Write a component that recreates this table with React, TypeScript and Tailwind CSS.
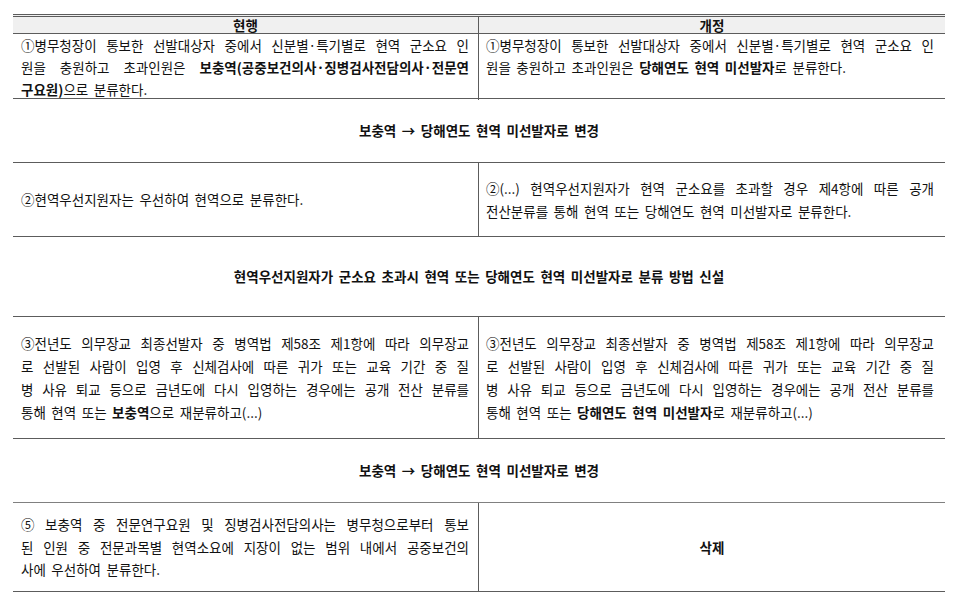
import React from "react";

const font = { fontFamily: '"Noto Sans CJK KR", "Noto Sans", sans-serif' };

function J({ children }: { children: React.ReactNode }) {
  return <div className="text-justify [text-align-last:justify]">{children}</div>;
}
function L({ children }: { children: React.ReactNode }) {
  return <div className="text-left [word-spacing:2.5px]">{children}</div>;
}
function B({ children }: { children: React.ReactNode }) {
  return <span className="font-bold">{children}</span>;
}
function W({ children }: { children: React.ReactNode }) {
  return <span className="inline-block">{children}</span>;
}

function Gap({ h, children }: { h: string; children: React.ReactNode }) {
  return (
    <div className={`${h} flex items-center justify-center font-bold [word-spacing:2.5px]`}>
      {children}
    </div>
  );
}

export default function App() {
  return (
    <div
      className="w-[960px] h-[609px] bg-white pt-[14px] pl-[13px] text-[13.5px] text-[#111111]"
      style={font}
    >
      <div className="w-[932px]">
        {/* header */}
        <div className="grid grid-cols-[466px_466px] border-t-[3px] border-double border-[#5c5c5c] border-b border-b-[#5c5c5c] bg-[#f0f0f0] h-[20px]">
          <div className="border-r border-[#5c5c5c] flex items-center justify-center font-bold leading-[16px] pb-[2px]">현행</div>
          <div className="flex items-center justify-center font-bold leading-[16px] pb-[2px]">개정</div>
        </div>
        {/* row 1 */}
        <div className="grid grid-cols-[466px_466px] border-b border-[#5c5c5c] h-[65px]">
          <div className="border-r border-[#5c5c5c] pl-[8px] pr-[9px] leading-[22px]">
            <J><W>①병무청장이</W> 통보한 선발대상자 중에서 신분별·특기별로 현역 군소요 인</J>
            <J>원을 충원하고 초과인원은 <B>보충역(공중보건의사·징병검사전담의사·전문연</B></J>
            <L><B>구요원)</B>으로 분류한다.</L>
          </div>
          <div className="pl-[7px] pr-[11px] leading-[22px]">
            <J><W>①병무청장이</W> 통보한 선발대상자 중에서 신분별·특기별로 현역 군소요 인</J>
            <L>원을 충원하고 초과인원은 <B>당해연도 현역 미선발자</B>로 분류한다.</L>
          </div>
        </div>
        <Gap h="h-[63px]">보충역 → 당해연도 현역 미선발자로 변경</Gap>
        {/* row 2 */}
        <div className="grid grid-cols-[466px_466px] border-t border-b border-[#5c5c5c] h-[75px]">
          <div className="border-r border-[#5c5c5c] pl-[8px] pr-[9px] leading-[23px] flex flex-col justify-center">
            <L>②현역우선지원자는 우선하여 현역으로 분류한다.</L>
          </div>
          <div className="pl-[7px] pr-[11px] leading-[23px] flex flex-col justify-center">
            <J><W>②(...)</W> 현역우선지원자가 현역 군소요를 초과할 경우 제4항에 따른 공개</J>
            <L>전산분류를 통해 현역 또는 당해연도 현역 미선발자로 분류한다.</L>
          </div>
        </div>
        <Gap h="h-[79px]">현역우선지원자가 군소요 초과시 현역 또는 당해연도 현역 미선발자로 분류 방법 신설</Gap>
        {/* row 3 */}
        <div className="grid grid-cols-[466px_466px] border-t border-b border-[#5c5c5c] h-[123px]">
          <div className="border-r border-[#5c5c5c] pl-[8px] pr-[9px] leading-[23px] flex flex-col justify-center">
            <J><W>③전년도</W> 의무장교 최종선발자 중 병역법 제58조 제1항에 따라 의무장교</J>
            <J>로 선발된 사람이 입영 후 신체검사에 따른 귀가 또는 교육 기간 중 질</J>
            <J>병 사유 퇴교 등으로 금년도에 다시 입영하는 경우에는 공개 전산 분류를</J>
            <L>통해 현역 또는 <B>보충역</B>으로 재분류하고(...)</L>
          </div>
          <div className="pl-[7px] pr-[11px] leading-[23px] flex flex-col justify-center">
            <J><W>③전년도</W> 의무장교 최종선발자 중 병역법 제58조 제1항에 따라 의무장교</J>
            <J>로 선발된 사람이 입영 후 신체검사에 따른 귀가 또는 교육 기간 중 질</J>
            <J>병 사유 퇴교 등으로 금년도에 다시 입영하는 경우에는 공개 전산 분류를</J>
            <L>통해 현역 또는 <B>당해연도 현역 미선발자</B>로 재분류하고(...)</L>
          </div>
        </div>
        <Gap h="h-[63px]">보충역 → 당해연도 현역 미선발자로 변경</Gap>
        {/* row 4 */}
        <div className="grid grid-cols-[466px_466px] border-t border-t-[#808080] border-b border-b-[#5c5c5c] h-[90px]">
          <div className="border-r border-[#5c5c5c] pl-[8px] pr-[9px] leading-[22.5px] flex flex-col justify-center">
            <J><W>⑤</W> 보충역 중 전문연구요원 및 징병검사전담의사는 병무청으로부터 통보</J>
            <J>된 인원 중 전문과목별 현역소요에 지장이 없는 범위 내에서 공중보건의</J>
            <L>사에 우선하여 분류한다.</L>
          </div>
          <div className="flex items-center justify-center font-bold">삭제</div>
        </div>
      </div>
    </div>
  );
}
